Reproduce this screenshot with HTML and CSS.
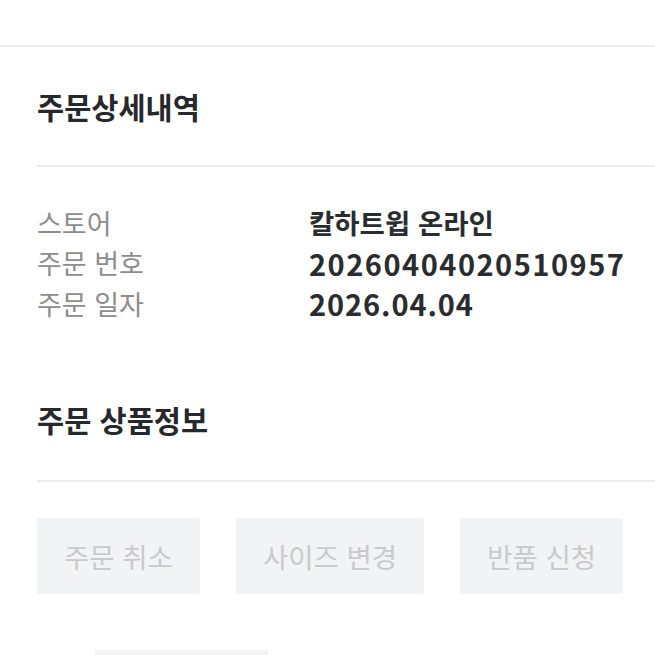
FILE: index.html
```html
<!DOCTYPE html>
<html lang="ko">
<head>
<meta charset="utf-8">
<link rel="stylesheet" href="styles.css">
</head>
<body>
<div class="topbar"></div>
<main class="content">
  <h2 class="title first">주문상세내역</h2>
  <div class="divider"></div>
  <dl class="info">
    <div class="row"><dt>스토어</dt><dd>칼하트윕 온라인</dd></div>
    <div class="row"><dt>주문 번호</dt><dd class="num">20260404020510957</dd></div>
    <div class="row"><dt>주문 일자</dt><dd class="num date">2026.04.04</dd></div>
  </dl>
  <h2 class="title second">주문 상품정보</h2>
  <div class="divider"></div>
  <div class="actions">
    <button class="btn">주문 취소</button>
    <button class="btn">사이즈 변경</button>
    <button class="btn">반품 신청</button>
  </div>
  <div class="thumb"></div>
</main>
</body>
</html>
```
FILE: styles.css
```css
* { box-sizing: border-box; }
html, body { margin: 0; padding: 0; background: #fff; overflow: hidden; }
body {
  font-family: "Noto Sans CJK KR", "Noto Sans", sans-serif;
  color: #2a2c30;
  height: 655px;
}
.topbar {
  height: 47px;
  border-bottom: 2px solid #ececec;
}
.content {
  padding-left: 37px;
}
.title {
  margin: 0;
  font-size: 29.5px;
  line-height: 40px;
  font-weight: 700;
  color: #26282c;
}
.title.first { margin-top: 39px; margin-bottom: 39px; }
.title.second { margin-top: 75px; margin-bottom: 41px; }
.divider {
  height: 2px;
  background: #ececec;
}
.info {
  margin: 35px 0 0;
}
.row {
  display: flex;
  align-items: center;
  height: 40.5px;
}
.row dt {
  width: 272px;
  font-size: 27px;
  color: #8d8d8d;
  font-weight: 400;
}
.row dd {
  margin: 0;
  font-size: 27.5px;
  font-weight: 700;
  color: #2a2c30;
}
.row dd.num {
  font-size: 29px;
  letter-spacing: 1.5px;
}
.row dd.date {
  letter-spacing: 0.9px;
}
.actions {
  display: flex;
  gap: 36px;
  margin-top: 36px;
}
.btn {
  height: 76px;
  padding: 0 27px;
  border: 0;
  border-radius: 2px;
  background: #f1f3f4;
  color: #c8cacc;
  font-family: inherit;
  font-size: 27.5px;
  font-weight: 400;
}
.thumb {
  margin: 56px 0 0 58px;
  width: 173px;
  height: 20px;
  background: #f4f4f4;
}
```
